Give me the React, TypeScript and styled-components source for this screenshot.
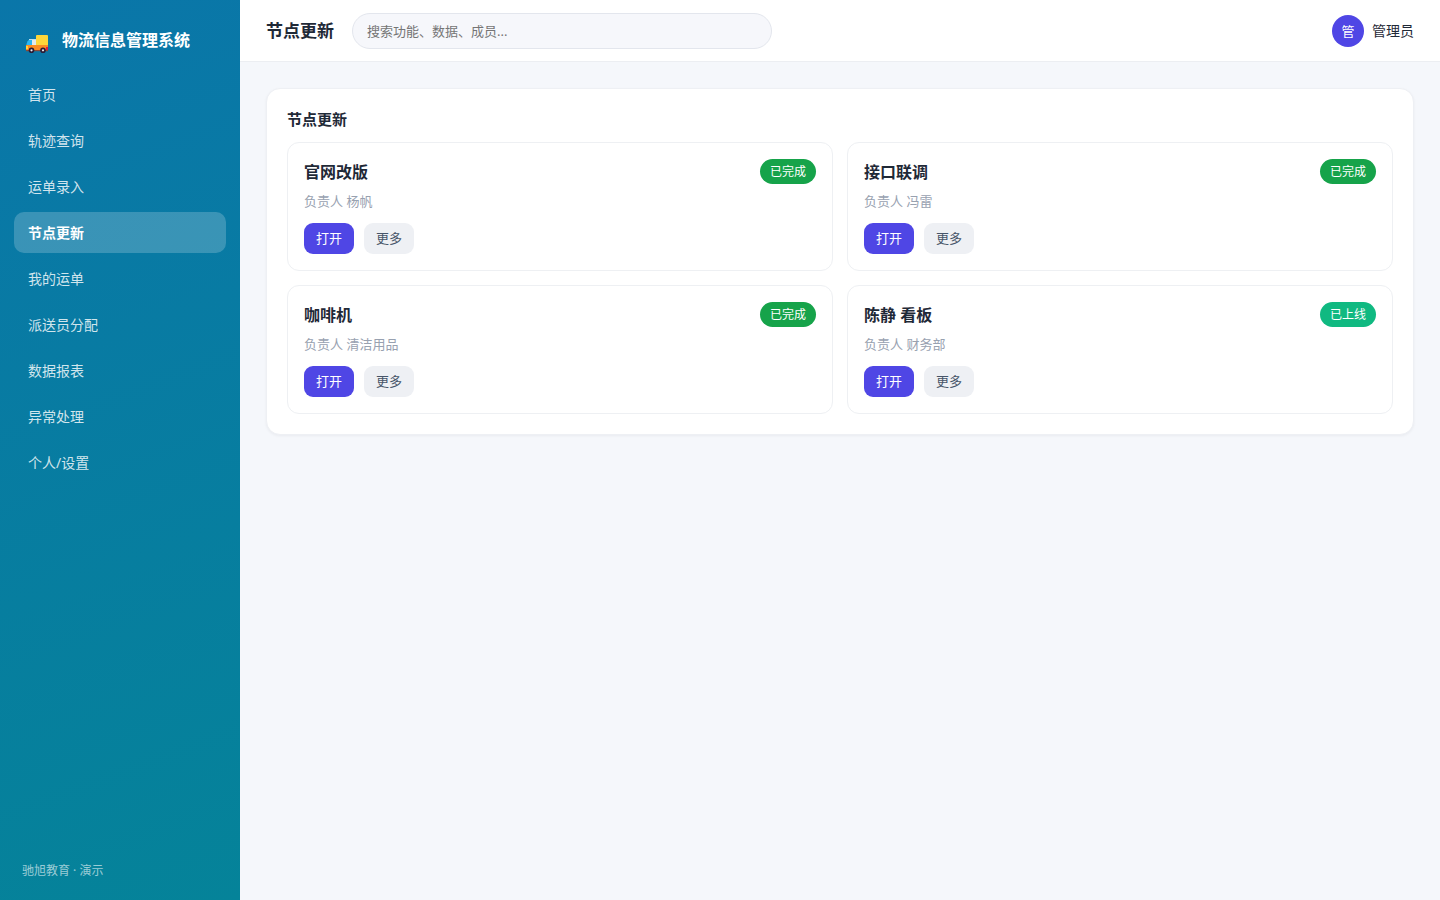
import React from "react";
import styled, { createGlobalStyle } from "styled-components";

const GlobalStyle = createGlobalStyle`
  *, *::before, *::after { box-sizing: border-box; }
  body {
    margin: 0;
    background: #f5f7fb;
    color: #1f2937;
    font-family: "Noto Sans", "Noto Sans CJK SC", sans-serif;
    font-size: 14px;
    line-height: 20px;
  }
  button, input { font-family: inherit; }
  h1, h2, h3, p { margin: 0; }
`;

const Layout = styled.div`
  display: flex;
  min-height: 100vh;
`;

const Sidebar = styled.aside`
  flex: 0 0 240px;
  display: flex;
  flex-direction: column;
  padding: 20px 14px;
  background: linear-gradient(160deg, #0a76a9, #058399);
  color: #fff;
`;

const Brand = styled.div`
  display: flex;
  align-items: center;
  gap: 12px;
  height: 40px;
  margin-bottom: 14px;
  padding: 0 10px;
  font-size: 16px;
  font-weight: 700;
`;

const TruckIcon = styled.svg`
  flex: none;
  width: 26px;
  height: 24px;
  margin-top: 8px;
`;

const Nav = styled.nav`
  display: flex;
  flex-direction: column;
  gap: 5px;
`;

const NavLink = styled.a<{ $active?: boolean }>`
  padding: 10px 14px;
  border-radius: 10px;
  line-height: 21px;
  text-decoration: none;
  color: ${(p) => (p.$active ? "#fff" : "rgba(255, 255, 255, 0.82)")};
  font-weight: ${(p) => (p.$active ? 700 : 400)};
  background: ${(p) => (p.$active ? "rgba(255, 255, 255, 0.2)" : "transparent")};
`;

const SidebarNote = styled.p`
  margin-top: auto;
  padding: 0 8px;
  font-size: 12px;
  line-height: 18px;
  color: rgba(255, 255, 255, 0.6);
`;

const Content = styled.div`
  flex: 1;
  min-width: 0;
`;

const Topbar = styled.header`
  display: flex;
  align-items: center;
  gap: 18px;
  height: 62px;
  padding: 0 26px;
  background: #fff;
  border-bottom: 1px solid #eceef2;
`;

const PageTitle = styled.h1`
  flex: none;
  font-size: 17px;
  line-height: 24px;
  font-weight: 700;
`;

const SearchInput = styled.input`
  flex: 0 1 420px;
  min-width: 0;
  height: 36px;
  padding: 0 14px;
  border: 1px solid #e3e6ed;
  border-radius: 18px;
  background: #f6f7fb;
  color: #1f2937;
  font-size: 13px;
  &::placeholder { color: #757575; }
`;

const User = styled.div`
  display: flex;
  align-items: center;
  gap: 8px;
  flex: none;
  margin-left: auto;
`;

const Avatar = styled.span`
  display: grid;
  place-items: center;
  width: 32px;
  height: 32px;
  border-radius: 50%;
  background: #4f46e5;
  color: #fff;
  font-size: 13px;
`;

const Main = styled.main`
  padding: 26px;
`;

const Panel = styled.section`
  padding: 20px;
  border: 1px solid #eef0f4;
  border-radius: 14px;
  background: #fff;
  box-shadow: 0 1px 3px rgba(16, 24, 40, 0.05);
`;

const PanelTitle = styled.h2`
  margin-bottom: 13px;
  font-size: 15px;
  line-height: 20px;
  font-weight: 700;
`;

const CardGrid = styled.div`
  display: grid;
  grid-template-columns: repeat(2, minmax(0, 1fr));
  gap: 14px;
`;

const Card = styled.article`
  padding: 16px;
  border: 1px solid #eef0f3;
  border-radius: 12px;
`;

const CardHead = styled.div`
  display: flex;
  align-items: center;
  justify-content: space-between;
`;

const CardTitle = styled.h3`
  font-size: 16px;
  line-height: 24px;
  font-weight: 700;
`;

const Badge = styled.span<{ $color: string }>`
  padding: 4px 10px;
  border-radius: 13px;
  background: ${(p) => p.$color};
  color: #fff;
  font-size: 12px;
  line-height: 17px;
`;

const Owner = styled.p`
  margin: 8px 0 12px;
  color: #98a1b0;
  font-size: 13px;
  line-height: 19px;
`;

const Actions = styled.div`
  display: flex;
  gap: 10px;
`;

const Button = styled.button<{ $primary?: boolean }>`
  padding: 6px 12px;
  border: 0;
  border-radius: 9px;
  background: ${(p) => (p.$primary ? "#4f46e5" : "#eef0f4")};
  color: ${(p) => (p.$primary ? "#fff" : "#475569")};
  font-size: 13px;
  line-height: 19px;
  cursor: pointer;
`;

const navItems = [
  "首页",
  "轨迹查询",
  "运单录入",
  "节点更新",
  "我的运单",
  "派送员分配",
  "数据报表",
  "异常处理",
  "个人/设置",
];

const DONE = "#16a34a";
const ONLINE = "#10b981";

const cards = [
  { title: "官网改版", owner: "杨帆", status: "已完成", color: DONE },
  { title: "接口联调", owner: "冯雷", status: "已完成", color: DONE },
  { title: "咖啡机", owner: "清洁用品", status: "已完成", color: DONE },
  { title: "陈静 看板", owner: "财务部", status: "已上线", color: ONLINE },
];

function Truck() {
  return (
    <TruckIcon viewBox="0 0 26 24" aria-hidden="true">
      <path d="M12 4Q12 3 13 3H23Q24 3 24 4V14H12Z" fill="#fdd63b" />
      <path d="M4.8 8H12V14H2.5V12Q3.2 9 4.8 8Z" fill="#29b6f6" />
      <path d="M5 7H12V8H5Z" fill="#b9dff0" />
      <path d="M8 8H12V13H8Z" fill="#e3e9ee" />
      <path d="M2 13H24V19H3Q2 19 2 18Z" fill="#fb8c24" />
      <path d="M2 14H4V17H2Z" fill="#fdd63b" />
      <path d="M22 15H24V18H22Z" fill="#e5173f" />
      <path d="M2 18H24V19.2H2Z" fill="#8a4a38" />
      <circle cx="7.5" cy="18.3" r="2.8" fill="#2b1b35" />
      <circle cx="19" cy="18.3" r="2.8" fill="#2b1b35" />
      <circle cx="7.5" cy="18.3" r="1.1" fill="#eceff1" />
      <circle cx="19" cy="18.3" r="1.1" fill="#eceff1" />
    </TruckIcon>
  );
}

export default function App() {
  return (
    <>
      <GlobalStyle />
      <Layout>
        <Sidebar>
          <Brand>
            <Truck />
            <span>物流信息管理系统</span>
          </Brand>
          <Nav>
            {navItems.map((item) => (
              <NavLink
                key={item}
                href="#"
                $active={item === "节点更新"}
                aria-current={item === "节点更新" ? "page" : undefined}
              >
                {item}
              </NavLink>
            ))}
          </Nav>
          <SidebarNote>驰旭教育 · 演示</SidebarNote>
        </Sidebar>
        <Content>
          <Topbar>
            <PageTitle>节点更新</PageTitle>
            <SearchInput
              type="search"
              aria-label="搜索"
              placeholder="搜索功能、数据、成员..."
            />
            <User>
              <Avatar>管</Avatar>
              <span>管理员</span>
            </User>
          </Topbar>
          <Main>
            <Panel>
              <PanelTitle>节点更新</PanelTitle>
              <CardGrid>
                {cards.map((card) => (
                  <Card key={card.title}>
                    <CardHead>
                      <CardTitle>{card.title}</CardTitle>
                      <Badge $color={card.color}>{card.status}</Badge>
                    </CardHead>
                    <Owner>负责人 {card.owner}</Owner>
                    <Actions>
                      <Button type="button" $primary>打开</Button>
                      <Button type="button">更多</Button>
                    </Actions>
                  </Card>
                ))}
              </CardGrid>
            </Panel>
          </Main>
        </Content>
      </Layout>
    </>
  );
}
